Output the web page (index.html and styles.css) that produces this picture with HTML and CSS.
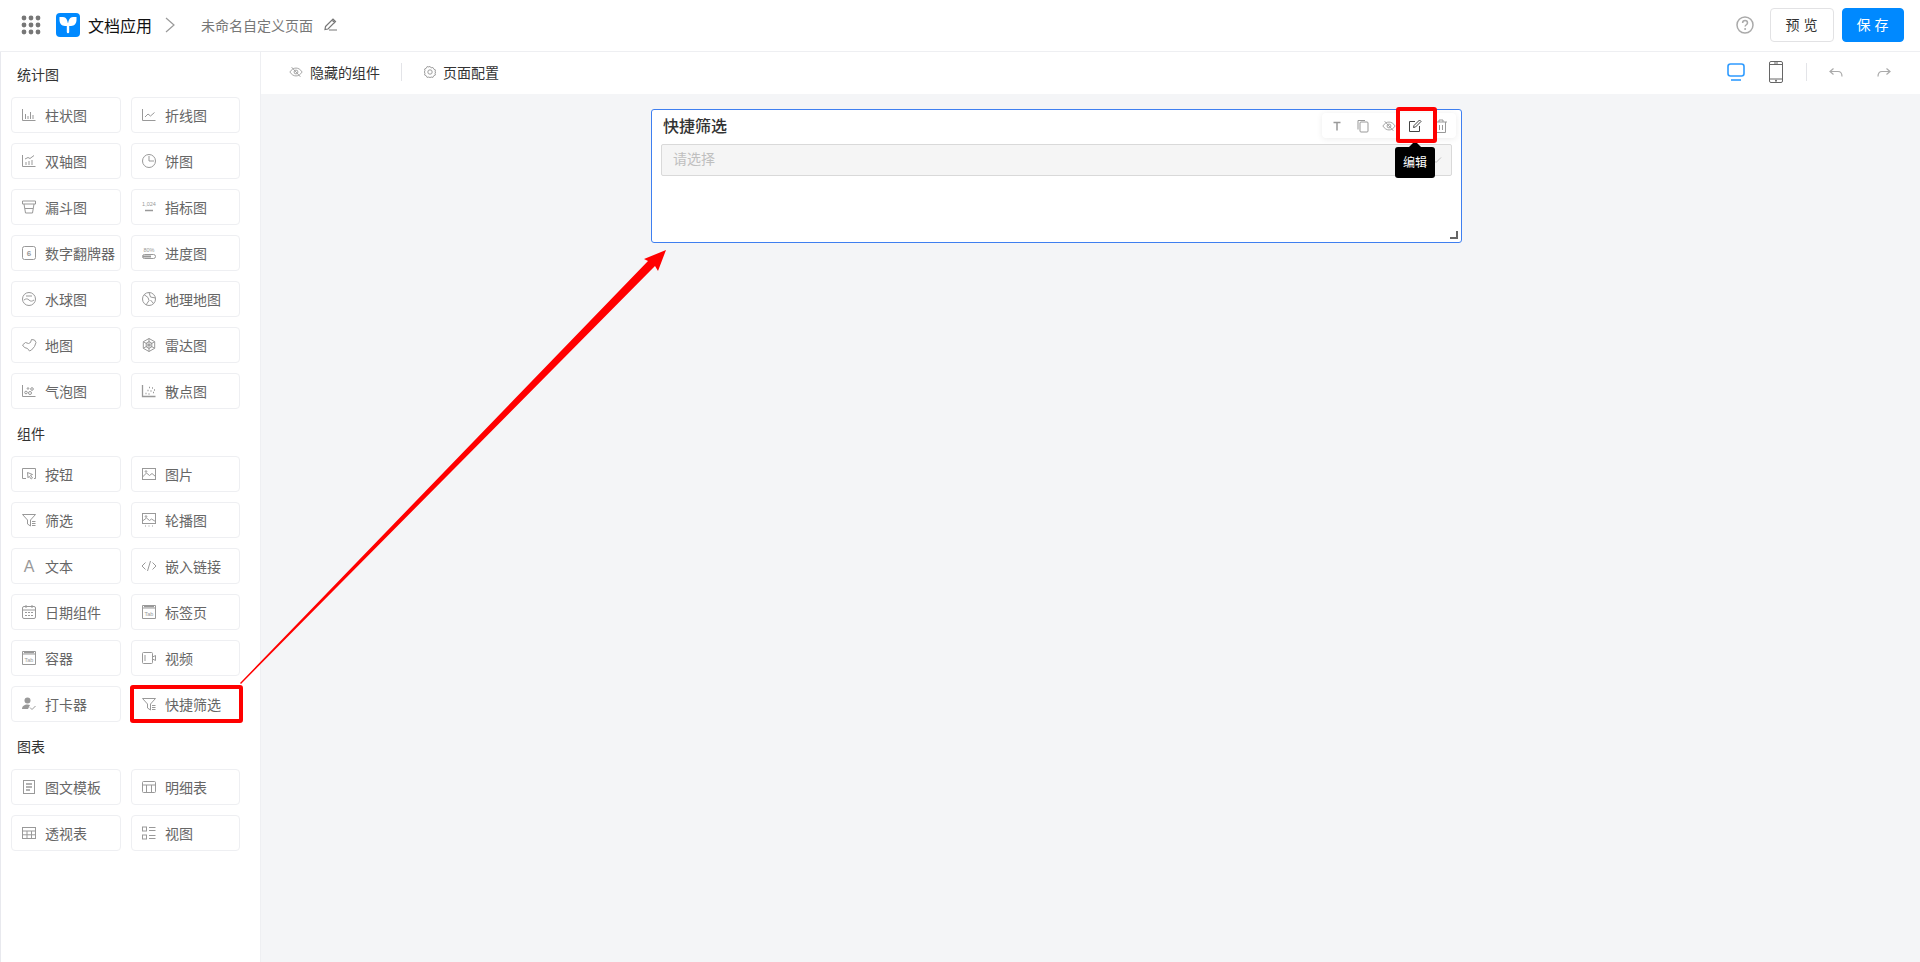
FILE: index.html
```html
<!DOCTYPE html>
<html lang="zh-CN">
<head>
<meta charset="utf-8">
<title>快捷筛选</title>
<link rel="stylesheet" href="styles.css">
</head>
<body>
<svg class="sprite" xmlns="http://www.w3.org/2000/svg">
  <symbol id="i-bar" viewBox="0 0 16 16"><path d="M1.500 2v11.500h13M4.500 12V7M7 12V9M9.500 12V5M12 12V8"/></symbol>
  <symbol id="i-line" viewBox="0 0 16 16"><path d="M1.500 2v11.500h13M4 10l3-3 2.500 2 4-3.500"/></symbol>
  <symbol id="i-dual" viewBox="0 0 16 16"><path d="M1.500 2v11.500h13M5 12V9M8 12V8M11 12V7M4 6l3-1.500 2 1 4-3"/></symbol>
  <symbol id="i-pie" viewBox="0 0 16 16"><circle cx="8" cy="8" r="6.500"/><path d="M8 3v5h5"/></symbol>
  <symbol id="i-funnel" viewBox="0 0 16 16"><path d="M1.500 2h13v3h-13zM3 5l1.500 9h7L13 5M4 9.500h8"/></symbol>
  <symbol id="i-metric" viewBox="0 0 16 16"><text x="8" y="7" class="mini" text-anchor="middle">1,024</text><path d="M4 11.500h8" stroke-width="1.500"/></symbol>
  <symbol id="i-flip" viewBox="0 0 16 16"><rect x="1.500" y="1.500" width="13" height="13" rx="2"/><text x="8" y="11" class="digit" text-anchor="middle">6</text></symbol>
  <symbol id="i-progress" viewBox="0 0 16 16"><text x="8" y="7" class="mini" text-anchor="middle">80%</text><rect x="1.500" y="9.500" width="13" height="4" rx="2"/><path d="M2 11.500h8" stroke-width="2"/></symbol>
  <symbol id="i-water" viewBox="0 0 16 16"><circle cx="8" cy="8" r="6.500"/><path d="M3 9c2-1.500 3.500-1.500 5 0s3 1.500 5 0M5 5h6"/></symbol>
  <symbol id="i-globe" viewBox="0 0 16 16"><circle cx="8" cy="8" r="6.500"/><path d="M3 3.500l4 3 1 3-3 4.500M8 1.500L9.500 6l5 1M9.500 9l3 3.500"/></symbol>
  <symbol id="i-map" viewBox="0 0 16 16"><path d="M1.500 8l3-2.500 3 1 2-1 1-3 3 .5 1.500 2.500-1.500 4-3 3.500-2 1-2-2.500-3-1z"/></symbol>
  <symbol id="i-radar" viewBox="0 0 16 16"><path d="M8 1.500l5.700 3.200v6.600L8 14.500l-5.700-3.200V4.700zM8 4.500l2.800 1.700v3.600L8 11.500 5.200 9.800V6.200zM8 1.500v13M2.300 4.700l11.400 6.600M13.700 4.700L2.300 11.300"/></symbol>
  <symbol id="i-bubble" viewBox="0 0 16 16"><path d="M1.500 2v11.500h13"/><circle cx="5" cy="9.500" r="1.300"/><circle cx="9" cy="10" r="1.500"/><circle cx="11" cy="6" r="1.300"/><circle cx="7" cy="5.500" r=".8"/></symbol>
  <symbol id="i-scatter" viewBox="0 0 16 16"><path d="M1.500 2v11.500h13M4.500 10.500h1M7.500 11h1M6.500 7.500h1M9.500 8h1M12 9.500h1M11 5h1M8 4.500h1M13 7h1" stroke-width="1.300"/></symbol>
  <symbol id="i-button" viewBox="0 0 16 16"><path d="M5 12.500H1.500v-10h13v10H13"/><path d="M6.500 6.500l5 2-2 .8 2 2.700-1.300 1-2-2.700-1.200 1.500z"/></symbol>
  <symbol id="i-image" viewBox="0 0 16 16"><rect x="1.500" y="2.500" width="13" height="11"/><path d="M1.500 11l4-4 3 2.500 2.500-2 3.500 3"/><circle cx="5" cy="5.500" r=".8"/></symbol>
  <symbol id="i-filter" viewBox="0 0 16 16"><path d="M1.500 2.500h13l-5 5.500v6l-3-2V8zM11 9.500h3.500M11 11.500h3.500M11 13.500h3.500"/></symbol>
  <symbol id="i-carousel" viewBox="0 0 16 16"><rect x="1.500" y="1.500" width="13" height="10"/><path d="M1.500 9l4-3 3 2.500 2-1.500 4 2.500M4 14h1M7.500 14h1M11 14h1"/><circle cx="5" cy="4.500" r=".8"/></symbol>
  <symbol id="i-text" viewBox="0 0 16 16"><text x="8" y="14" class="big" text-anchor="middle">A</text></symbol>
  <symbol id="i-code" viewBox="0 0 16 16"><path d="M4.500 4.500L1 8l3.500 3.500M11.500 4.500L15 8l-3.500 3.500M9.500 3L6.500 13"/></symbol>
  <symbol id="i-calendar" viewBox="0 0 16 16"><rect x="1.500" y="2.500" width="13" height="12" rx="1.500"/><path d="M1.500 6h13M5 1v3M11 1v3M4 8.500h2M7 8.500h2M10 8.500h2M4 11.500h2M7 11.500h2M10 11.500h2"/></symbol>
  <symbol id="i-tab" viewBox="0 0 16 16"><path d="M1.500 14.500v-13h13v13zM1.500 4h13"/><path d="M3 2.500h10" stroke-width="1.500"/><text x="8" y="12" class="mini" text-anchor="middle">Tab</text></symbol>
  <symbol id="i-video" viewBox="0 0 16 16"><rect x="1.500" y="2.500" width="10" height="11" rx="1"/><path d="M11.500 7l3-1.500v5l-3-1.500M4 5v6"/></symbol>
  <symbol id="i-clock" viewBox="0 0 16 16"><circle cx="6.500" cy="4.500" r="3" class="solid"/><path class="solid" d="M1 13c0-3 2.500-4.500 5.500-4.500 1 0 2 .2 2.500.5L7 13z"/><path d="M9 11.500l2 2 3.500-3.500"/></symbol>
  <symbol id="i-doc" viewBox="0 0 16 16"><rect x="2.500" y="1.500" width="11" height="13"/><path d="M5 5h6M5 8h6M5 11h4" stroke-width="1.300"/></symbol>
  <symbol id="i-table" viewBox="0 0 16 16"><rect x="1.500" y="2.500" width="13" height="11" rx="1"/><path d="M1.500 6h13M5.500 6v7.500M10.500 6v7.500" /></symbol>
  <symbol id="i-pivot" viewBox="0 0 16 16"><rect x="1.500" y="2.500" width="13" height="11"/><path d="M1.500 6h13M1.500 9.800h13M6 6v7.500M10.500 6v7.500"/></symbol>
  <symbol id="i-view" viewBox="0 0 16 16"><rect x="1.500" y="2" width="4" height="4"/><rect x="1.500" y="10" width="4" height="4"/><path d="M8 2.500h6.500M8 5.500h6.500M8 10.500h6.500M8 13.500h6.500"/></symbol>
  <symbol id="i-eyeoff" viewBox="0 0 16 16"><path d="M1 8c2-3 4.300-4.500 7-4.500S13 5 15 8c-2 3-4.300 4.500-7 4.500S3 11 1 8z"/><circle cx="8" cy="8" r="2.200"/><path d="M3 2.500l10 11"/></symbol>
</svg>

<header class="topbar">
  <svg class="apps" viewBox="0 0 20 20"><circle cx="3" cy="3" r="2.400"/><circle cx="10" cy="3" r="2.400"/><circle cx="17" cy="3" r="2.400"/><circle cx="3" cy="10" r="2.400"/><circle cx="10" cy="10" r="2.400"/><circle cx="17" cy="10" r="2.400"/><circle cx="3" cy="17" r="2.400"/><circle cx="10" cy="17" r="2.400"/><circle cx="17" cy="17" r="2.400"/></svg>
  <span class="logo"><svg viewBox="0 0 24 24"><path d="M3.500 4H7c3 0 5 3 5 9H9C5.500 13 3.500 10 3.500 7zM20.500 4H17c-3 0-5 3-5 9h3c3.500 0 5.500-3 5.500-6z" fill="#fff"/><path d="M12 11v8" stroke="#fff" stroke-width="2.400" stroke-linecap="round"/></svg></span>
  <span class="app-name">文档应用</span>
  <svg class="crumb" viewBox="0 0 10 16"><path d="M1 1l8 7-8 7"/></svg>
  <span class="page-name">未命名自定义页面</span>
  <svg class="pencil" viewBox="0 0 14 14"><path d="M1.500 9.500L9 2l2.500 2.500L4 12l-3 .5zM8 3l3 3M5 13h8"/></svg>
  <span class="spacer"></span>
  <svg class="help" viewBox="0 0 18 18"><circle cx="9" cy="9" r="8"/><path d="M6.600 7c0-1.500 1.100-2.400 2.500-2.400S11.500 5.500 11.500 7c0 1.700-2.400 1.800-2.400 3.500"/><circle class="dot" cx="9.100" cy="13" r="1"/></svg>
  <button class="btn">预览</button>
  <button class="btn primary">保存</button>
</header>

<div class="workspace">
  <aside class="sidebar">
    <h3 class="group-title first">统计图</h3>
    <div class="palette">
      <div class="item"><svg class="ico"><use href="#i-bar"/></svg>柱状图</div>
      <div class="item"><svg class="ico"><use href="#i-line"/></svg>折线图</div>
      <div class="item"><svg class="ico"><use href="#i-dual"/></svg>双轴图</div>
      <div class="item"><svg class="ico"><use href="#i-pie"/></svg>饼图</div>
      <div class="item"><svg class="ico"><use href="#i-funnel"/></svg>漏斗图</div>
      <div class="item"><svg class="ico"><use href="#i-metric"/></svg>指标图</div>
      <div class="item"><svg class="ico"><use href="#i-flip"/></svg>数字翻牌器</div>
      <div class="item"><svg class="ico"><use href="#i-progress"/></svg>进度图</div>
      <div class="item"><svg class="ico"><use href="#i-water"/></svg>水球图</div>
      <div class="item"><svg class="ico"><use href="#i-globe"/></svg>地理地图</div>
      <div class="item"><svg class="ico"><use href="#i-map"/></svg>地图</div>
      <div class="item"><svg class="ico"><use href="#i-radar"/></svg>雷达图</div>
      <div class="item"><svg class="ico"><use href="#i-bubble"/></svg>气泡图</div>
      <div class="item"><svg class="ico"><use href="#i-scatter"/></svg>散点图</div>
    </div>
    <h3 class="group-title">组件</h3>
    <div class="palette">
      <div class="item"><svg class="ico"><use href="#i-button"/></svg>按钮</div>
      <div class="item"><svg class="ico"><use href="#i-image"/></svg>图片</div>
      <div class="item"><svg class="ico"><use href="#i-filter"/></svg>筛选</div>
      <div class="item"><svg class="ico"><use href="#i-carousel"/></svg>轮播图</div>
      <div class="item"><svg class="ico"><use href="#i-text"/></svg>文本</div>
      <div class="item"><svg class="ico"><use href="#i-code"/></svg>嵌入链接</div>
      <div class="item"><svg class="ico"><use href="#i-calendar"/></svg>日期组件</div>
      <div class="item"><svg class="ico"><use href="#i-tab"/></svg>标签页</div>
      <div class="item"><svg class="ico"><use href="#i-tab"/></svg>容器</div>
      <div class="item"><svg class="ico"><use href="#i-video"/></svg>视频</div>
      <div class="item"><svg class="ico"><use href="#i-clock"/></svg>打卡器</div>
      <div class="item"><svg class="ico"><use href="#i-filter"/></svg>快捷筛选</div>
    </div>
    <h3 class="group-title">图表</h3>
    <div class="palette">
      <div class="item"><svg class="ico"><use href="#i-doc"/></svg>图文模板</div>
      <div class="item"><svg class="ico"><use href="#i-table"/></svg>明细表</div>
      <div class="item"><svg class="ico"><use href="#i-pivot"/></svg>透视表</div>
      <div class="item"><svg class="ico"><use href="#i-view"/></svg>视图</div>
    </div>
  </aside>

  <main class="editor">
    <div class="toolbar">
      <button class="tool"><svg class="tool-ico"><use href="#i-eyeoff"/></svg>隐藏的组件</button>
      <span class="vline"></span>
      <button class="tool config"><svg class="tool-ico gear" viewBox="0 0 16 16"><circle cx="8" cy="8" r="2.500"/><path d="M8 1.500l1.200 1.800 2.100-.5 1 1.900 1.900.9-.5 2.100L14.500 8l-.8 1.300.5 2.100-1.900.9-1 1.900-2.100-.5L8 14.500l-1.200-.8-2.100.5-1-1.900-1.900-.9.500-2.100L1.500 8l.8-1.300-.5-2.100 1.900-.9 1-1.900 2.100.5z"/></svg>页面配置</button>
      <span class="spacer"></span>
      <svg class="monitor" viewBox="0 0 18 18"><rect x="1" y="1" width="16" height="12" rx="2.500"/><path d="M4 17h10"/></svg>
      <svg class="phone" viewBox="0 0 14 22"><rect x=".5" y=".5" width="13" height="21" rx="1.500"/><path d="M.5 3.500h13M.5 18h13M5 2h4"/><circle class="dot" cx="7" cy="19.800" r="1"/></svg>
      <span class="vline right"></span>
      <svg class="history" viewBox="0 0 14 9"><path d="M4.500 .5L1 3.500l3.500 3M1 3.500h8c2.500 0 4 1.500 4 5"/></svg>
      <svg class="history redo" viewBox="0 0 14 9"><path d="M9.500 .5L13 3.500l-3.500 3M13 3.500H5c-2.500 0-4 1.500-4 5"/></svg>
    </div>

    <section class="widget">
      <h2 class="widget-title">快捷筛选</h2>
      <div class="select">请选择<svg class="caret" viewBox="0 0 12 8"><path d="M1 1.500l5 5 5-5"/></svg></div>
      <span class="resize"></span>
      <div class="actions">
        <span class="act"><svg class="act-ico" viewBox="0 0 14 14"><path d="M3.500 3.500h7M7 3.500v8" stroke-width="1.500"/></svg></span>
        <span class="act"><svg class="act-ico" viewBox="0 0 14 14"><rect x="4" y="3" width="8" height="10" rx="1"/><path d="M2 10.500V1.500h7"/></svg></span>
        <span class="act"><svg class="act-ico"><use href="#i-eyeoff"/></svg></span>
        <span class="act"><svg class="act-ico dark" viewBox="0 0 14 14"><path d="M7 2.500H1.500v10h10V7M5.500 8.500l.5-2L11.500 1l1.500 1.500L7.500 8z"/></svg></span>
        <span class="act"><svg class="act-ico" viewBox="0 0 14 14"><path d="M1 3h12M5 3V1h4v2M2.500 3v10.500h9V3M5.500 6v5M8.500 6v5"/></svg></span>
      </div>
      <div class="tip">编辑</div>
    </section>
  </main>
</div>

<svg class="marks" viewBox="0 0 1920 962">
  <rect x="132" y="687" width="109" height="34" rx="1"/>
  <rect x="1398" y="109" width="37" height="32" rx="1"/>
  <polygon class="arrow" points="240,683 648,261 644,259 666,250 658,271 655,266 241,684"/>
</svg>
</body>
</html>
```

FILE: styles.css
```css
* { box-sizing: border-box; }
html, body { margin: 0; height: 100%; }
body {
  position: relative;
  height: 962px;
  overflow: hidden;
  display: flex;
  flex-direction: column;
  background: #fff;
  font-family: "Noto Sans CJK SC", "Noto Sans", sans-serif;
  font-size: 14px;
  color: #333;
}
.sprite { display: none; }
.mini { font: 5.500px "Liberation Sans", sans-serif; fill: #999; stroke: none; }
.digit { font: bold 8px "Liberation Sans", sans-serif; fill: #999; stroke: none; }
.big { font: 16px "Liberation Sans", sans-serif; fill: #999; stroke: none; }
.solid { fill: #999; stroke: none; }
.spacer { flex: 1; }

.topbar {
  flex: none;
  height: 52px;
  display: flex;
  align-items: center;
  padding: 0 16px 2px 21px;
  border-bottom: 1px solid #eeeff2;
}
.apps { width: 20px; height: 20px; fill: #777; margin-right: 15px; }
.logo { width: 24px; height: 24px; border-radius: 4px; background: #0089ff; margin-right: 8px; display: block; }
.logo svg { width: 24px; height: 24px; display: block; }
.app-name { font-size: 16px; color: #111; margin-right: 13px; }
.crumb { width: 10px; height: 16px; fill: none; stroke: #999; stroke-width: 1.200; margin-right: 26px; }
.page-name { color: #777; margin-right: 11px; }
.pencil { width: 14px; height: 14px; margin-top: -2px; fill: none; stroke: #777; stroke-width: 1.200; }
.help { width: 18px; height: 18px; fill: none; stroke: #aaa; stroke-width: 1.500; margin-right: 16px; }
.help .dot { fill: #aaa; stroke: none; }
.btn {
  width: 64px;
  height: 34px;
  margin: 0;
  padding: 0 0 2px;
  border: 1px solid #e2e2e4;
  border-radius: 4px;
  background: #fff;
  font: inherit;
  color: #333;
  letter-spacing: 4px;
  text-indent: 3px;
}
.btn.primary { width: 62px; margin-left: 8px; background: #0089ff; border-color: #0089ff; color: #fff; }

.workspace { flex: 1; min-height: 0; display: flex; }
.sidebar {
  flex: none;
  width: 261px;
  padding: 11px 20px 0 10px;
  border-left: 1px solid #e8e9ee;
  border-right: 1px solid #eeeff2;
}
.group-title {
  margin: 13px 0 12px 6px;
  font-size: 14px;
  line-height: 22px;
  font-weight: 400;
  color: #333;
}
.group-title.first { margin-top: 0; }
.palette { display: grid; grid-template-columns: 110px 109px; gap: 10px; }
.item {
  height: 36px;
  display: flex;
  align-items: center;
  gap: 8px;
  padding-left: 9px;
  border: 1px solid #eeeff2;
  border-radius: 4px;
  color: #666;
  white-space: nowrap;
  background: #fff;
}
.ico { flex: none; width: 16px; height: 16px; fill: none; stroke: #999; stroke-width: 1; }

.editor { flex: 1; min-width: 0; background: #f4f5f7; }
.toolbar {
  height: 42px;
  display: flex;
  align-items: center;
  padding: 0 29px 2px 28px;
  background: #fff;
}
.tool {
  display: flex;
  align-items: center;
  gap: 7px;
  margin: 0;
  padding: 0;
  border: 0;
  background: none;
  font: inherit;
  color: #333;
}
.tool.config { gap: 6px; }
.tool-ico { flex: none; width: 14px; height: 14px; fill: none; stroke: #999; stroke-width: 1; }
.vline { width: 1px; height: 18px; background: #e3e4e8; margin: 0 21px 0 21px; }
.vline.right { margin: 0 22px 0 23px; }
.gear { stroke-width: 1.100; }
.monitor { width: 18px; height: 18px; fill: none; stroke: #2f9bff; stroke-width: 1.600; margin-right: 24px; }
.phone { width: 14px; height: 22px; fill: none; stroke: #666; stroke-width: 1; }
.phone .dot { fill: #666; stroke: none; }
.history { width: 14px; height: 9px; fill: none; stroke: #aaa; stroke-width: 1.200; }
.redo { margin-left: 34px; }

.widget {
  position: relative;
  width: 811px;
  height: 134px;
  margin: 15px 0 0 390px;
  padding: 4px 9px;
  background: #fff;
  border: 1px solid #3f7ff0;
  border-radius: 3px;
}
.widget-title { margin: 0 0 7px 2px; font-size: 16px; line-height: 23px; font-weight: 500; color: #333; }
.select {
  position: relative;
  height: 32px;
  line-height: 27px;
  padding-left: 11px;
  background: #f5f5f5;
  border: 1px solid #d9d9d9;
  border-radius: 2px;
  color: #bfbfbf;
}
.caret { position: absolute; right: 9px; top: 11px; width: 12px; height: 8px; fill: none; stroke: #bfbfbf; }
.resize {
  position: absolute;
  right: 3px;
  bottom: 3px;
  width: 8px;
  height: 8px;
  border-right: 2px solid #666;
  border-bottom: 2px solid #666;
}
.actions {
  position: absolute;
  left: 670px;
  top: 3px;
  width: 134px;
  height: 25px;
  display: flex;
  align-items: center;
  padding-left: 2px;
  background: #fff;
  border-radius: 4px;
  box-shadow: 0 1px 6px rgba(0, 0, 0, .08);
}
.act { width: 26px; display: flex; justify-content: center; }
.act-ico { width: 14px; height: 14px; fill: none; stroke: #999; stroke-width: 1; }
.act-ico.dark { stroke: #444; }
.tip {
  position: absolute;
  left: 743px;
  top: 37px;
  width: 40px;
  height: 31px;
  line-height: 29px;
  text-align: center;
  font-size: 12px;
  color: #fff;
  background: #000;
  border-radius: 3px;
}
.tip::before {
  content: "";
  position: absolute;
  left: 14px;
  top: -6px;
  border: 6px solid transparent;
  border-top: 0;
  border-bottom-color: #000;
}
.marks { position: absolute; left: 0; top: 0; width: 1920px; height: 962px; fill: none; stroke: #f00; stroke-width: 4; pointer-events: none; }
.arrow { fill: #f00; stroke: none; }
```
